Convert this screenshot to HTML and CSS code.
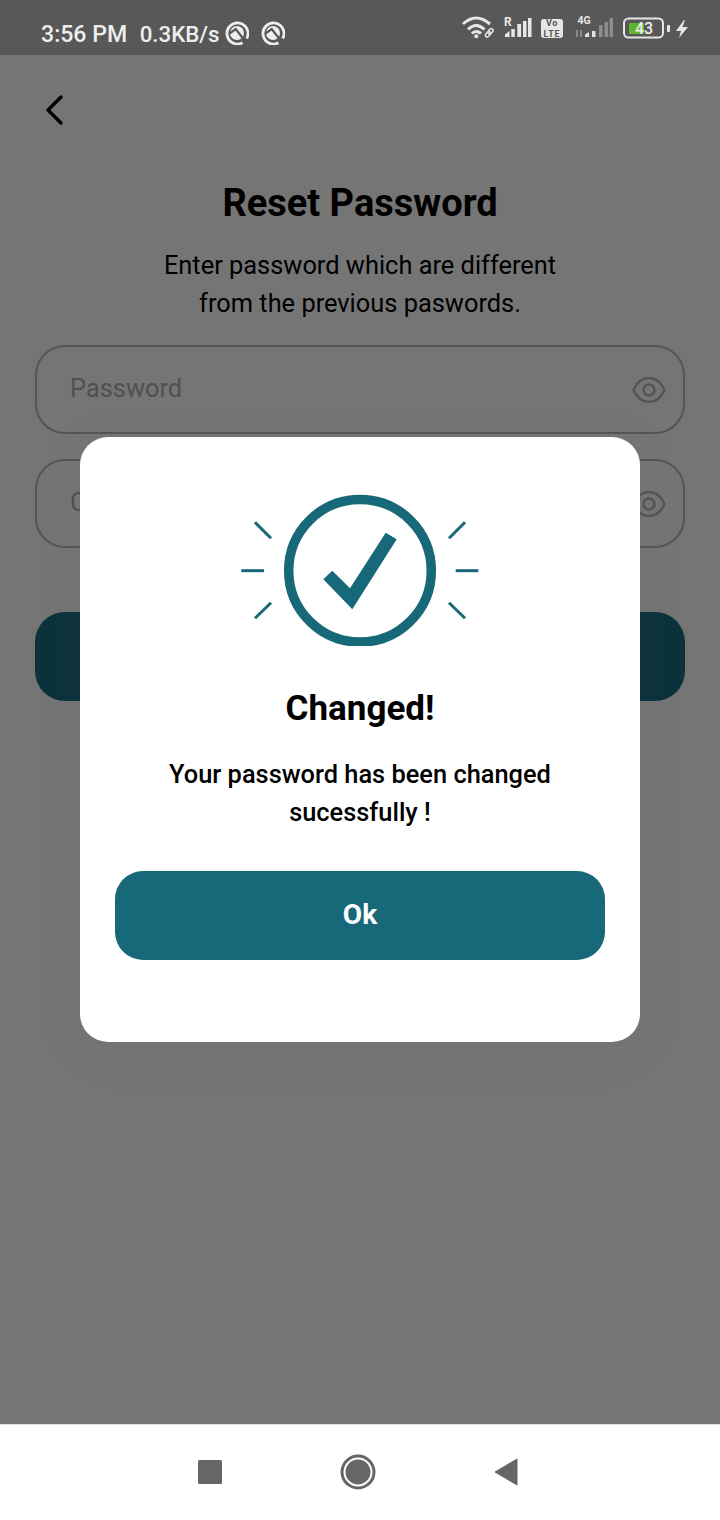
FILE: index.html
```html
<!DOCTYPE html>
<html lang="en">
<head>
    <meta charset="UTF-8">
    <meta name="viewport" content="width=device-width, initial-scale=1.0">
    <title>Reset Password</title>
    <link rel="stylesheet" href="styles.css">
</head>
<body>

    <div class="status-bar">
        <span class="clock">3:56 PM</span>
        <span class="speed">0.3KB/s</span>
        <svg class="dnd first" viewBox="0 0 24 24">
            <path d="M17.500 21.700A10.500 10.500 0 1 1 21.700 17.500" fill="none" stroke="#eee" stroke-width="2.800"/>
            <circle cx="12" cy="12" r="7" fill="#eee"/>
            <path d="M4.500 12.500L10.700 8 20 20" fill="none" stroke="#585858" stroke-width="2.200"/>
        </svg>
        <svg class="dnd" viewBox="0 0 24 24">
            <path d="M17.500 21.700A10.500 10.500 0 1 1 21.700 17.500" fill="none" stroke="#eee" stroke-width="2.800"/>
            <circle cx="12" cy="12" r="7" fill="#eee"/>
            <path d="M4.500 12.500L10.700 8 20 20" fill="none" stroke="#585858" stroke-width="2.200"/>
        </svg>
        <svg class="sys-icons" viewBox="460 20 232 30">
            <!-- wifi -->
            <g fill="none" stroke="#e6e6e6" stroke-width="3">
                <path d="M463 31Q476 19 490 31"/>
                <path d="M468 36.500Q476 28.500 484.500 36.500"/>
                <path d="M472 40.500Q476 36.500 481 40.500"/>
            </g>
            <circle cx="476.300" cy="43.300" r="2" fill="#e6e6e6"/>
            <g fill="none" stroke="#e6e6e6" stroke-width="1.500">
                <rect x="485" y="39.500" width="6" height="3.600" rx="1.800" transform="rotate(-50 488 41.300)"/>
                <rect x="487.500" y="36.500" width="6" height="3.600" rx="1.800" transform="rotate(-50 490.500 38.300)"/>
            </g>
            <!-- sim 1 -->
            <text class="sig-label" x="504" y="33">R</text>
            <g fill="#e6e6e6">
                <path d="M505 44v-2.500l4.500-3.500v6z"/>
                <rect x="511.300" y="36" width="3.500" height="8"/>
                <rect x="517.300" y="31" width="3.800" height="13"/>
                <rect x="523" y="28" width="3.500" height="16"/>
                <rect x="528" y="25" width="3.500" height="19"/>
            </g>
            <!-- volte -->
            <rect x="541" y="26" width="22" height="19" rx="3" fill="#e6e6e6"/>
            <text class="volte" x="552" y="33.300">Vo</text>
            <text class="volte lte" x="552" y="44">LTE</text>
            <!-- sim 2 -->
            <text class="sig-label small" x="577.500" y="30.500">4G</text>
            <path d="M577 37v7M581 37v7" stroke="#9a9a9a" stroke-width="1.500"/>
            <path d="M585 44v-2.500l4-2.500v5z" fill="#e0e0e0"/>
            <rect x="592" y="38" width="3.500" height="6" fill="#e0e0e0"/>
            <g fill="#8c8c8c">
                <rect x="599" y="32" width="3.500" height="12"/>
                <rect x="604.500" y="29" width="3.500" height="15"/>
                <rect x="609.500" y="25" width="3.500" height="19"/>
            </g>
            <!-- battery -->
            <rect x="624" y="25.500" width="39" height="19" rx="4.500" fill="none" stroke="#e6e6e6" stroke-width="2"/>
            <rect x="629" y="30" width="15" height="11" rx="1" fill="#5fb52d"/>
            <text class="batt" x="644" y="41">43</text>
            <rect x="667" y="32" width="3" height="7" rx="1" fill="#e6e6e6"/>
            <path d="M684 27l-8 11h5l-2 7 9-11h-5.500l2.500-7z" fill="#e6e6e6"/>
        </svg>
    </div>

    <div class="screen">
        <button class="back">
            <svg viewBox="0 0 20 32" width="20" height="32">
                <path d="M17 3L4 16l13 13" fill="none" stroke="#000" stroke-width="3.400" stroke-linecap="round" stroke-linejoin="round"/>
            </svg>
        </button>

        <h2 class="title">Reset Password</h2>
        <p class="subtitle">Enter password which are different<br>from the previous paswords.</p>

        <div class="field">
            <span class="placeholder">Password</span>
            <svg class="eye" viewBox="0 0 34 28">
                <path d="M1.500 14C5 6 10.500 2 17 2s12 4 15.500 12C29 22 23.500 26 17 26S5 22 1.500 14z" fill="none" stroke="#555" stroke-width="2.600"/>
                <circle cx="17" cy="14" r="5.500" fill="none" stroke="#555" stroke-width="2.600"/>
            </svg>
        </div>
        <div class="field second">
            <span class="placeholder">Confirm Password</span>
            <svg class="eye" viewBox="0 0 34 28">
                <path d="M1.500 14C5 6 10.500 2 17 2s12 4 15.500 12C29 22 23.500 26 17 26S5 22 1.500 14z" fill="none" stroke="#555" stroke-width="2.600"/>
                <circle cx="17" cy="14" r="5.500" fill="none" stroke="#555" stroke-width="2.600"/>
            </svg>
        </div>
        <div class="submit"></div>

        <div class="dialog">
            <svg class="success" viewBox="0 0 240 156" width="240" height="156">
                <circle cx="120" cy="80.700" r="71.300" fill="none" stroke="#176879" stroke-width="9.500"/>
                <path d="M145.700 42.700L156.700 49.300 112.300 119.300 83.300 89.300 92.300 80.700 110 98.300z" fill="#176879"/>
                <g stroke="#176879" stroke-width="3">
                    <path d="M1.300 80.700H24"/>
                    <path d="M215.700 80.700H238.300"/>
                    <path d="M15 32.300L31 48.300"/>
                    <path d="M225 32.300L209 48.300"/>
                    <path d="M31 112.700L15 128.300"/>
                    <path d="M209 112.700L225 128.300"/>
                </g>
            </svg>
            <h3 class="dialog-title">Changed!</h3>
            <p class="dialog-text">Your password has been changed<br>sucessfully !</p>
            <button class="ok">Ok</button>
        </div>
    </div>

    <div class="nav-bar">
        <svg viewBox="0 0 24 24" width="24" height="24"><rect width="24" height="24" rx="1.500" fill="#666"/></svg>
        <svg viewBox="0 0 36 36" width="36" height="36">
            <circle cx="18" cy="18" r="16" fill="none" stroke="#666" stroke-width="3"/>
            <circle cx="18" cy="18" r="12.500" fill="#666"/>
        </svg>
        <svg viewBox="0 0 24 28" width="24" height="28"><path d="M23 1v26L1 14z" fill="#666" stroke="#666" stroke-linejoin="round"/></svg>
    </div>

</body>
</html>
```

FILE: styles.css
```css
* {
    box-sizing: border-box;
}

body {
    font-family: Roboto, sans-serif;
    margin: 0;
    width: 720px;
    height: 1520px;
    display: flex;
    flex-direction: column;
    overflow: hidden;
    background: #757575;
}

.status-bar {
    height: 55px;
    background: #585858;
    color: #eee;
    display: flex;
    align-items: center;
    padding: 13px 0 0 41px;
    font-weight: 500;
}

.clock {
    font-size: 23.100px;
}

.speed {
    font-size: 22.300px;
    margin-left: 12.500px;
}

.dnd {
    width: 24px;
    height: 24px;
    margin-left: 12px;
    margin-top: -2px;
}

.dnd.first {
    margin-left: 5px;
}

.sys-icons {
    width: 232px;
    height: 30px;
    margin-left: auto;
    margin-right: 28px;
    margin-top: -13px;
}

.sig-label {
    font-size: 12px;
    font-weight: 700;
    fill: #e6e6e6;
}

.sig-label.small {
    font-size: 10.500px;
}

.volte {
    font-size: 9px;
    font-weight: 700;
    fill: #555;
    text-anchor: middle;
    letter-spacing: 0.5px;
}

.volte.lte {
    font-size: 9px;
    letter-spacing: 0.8px;
}

.batt {
    font-size: 16px;
    font-weight: 500;
    fill: #eee;
    text-anchor: middle;
}

.screen {
    flex: 1;
    position: relative;
    padding: 26px 35px 0;
    display: flex;
    flex-direction: column;
}

.back {
    background: none;
    border: none;
    padding: 0;
    margin-left: 9px;
    width: 20px;
    height: 60px;
}

.title {
    font-size: 38px;
    font-weight: 700;
    color: #000;
    text-align: center;
    margin: 37px 0 0;
    line-height: 50px;
}

.subtitle {
    font-size: 25.400px;
    color: #000;
    text-align: center;
    line-height: 38px;
    margin: 18px 0 0;
}

.field {
    height: 89px;
    margin-top: 23px;
    border: 2px solid #555;
    border-radius: 30px;
    display: flex;
    align-items: center;
    justify-content: space-between;
    padding: 0 17px 0 33px;
}

.field.second {
    margin-top: 25px;
}

.placeholder {
    font-size: 25.400px;
    color: #505050;
    margin-top: -4px;
}

.eye {
    width: 34px;
    height: 28px;
}

.submit {
    height: 89px;
    margin-top: 64px;
    background: #0c323c;
    border-radius: 30px;
}

.dialog {
    position: absolute;
    left: 80px;
    top: 382px;
    width: 560px;
    height: 605px;
    background: white;
    border-radius: 28px;
    box-shadow: 0 10px 50px rgba(90, 100, 130, 0.08);
    display: flex;
    flex-direction: column;
    align-items: center;
    padding-top: 53px;
}

.success {
    display: block;
}

.dialog-title {
    font-size: 35px;
    font-weight: 700;
    color: #000;
    line-height: 40px;
    margin: 43px 0 0;
}

.dialog-text {
    font-size: 25.400px;
    font-weight: 500;
    color: #000;
    text-align: center;
    line-height: 38px;
    margin: 26px 0 0;
}

.ok {
    width: 490px;
    height: 89px;
    margin-top: 40px;
    border: none;
    border-radius: 28px;
    background: #176879;
    color: white;
    font-family: Roboto, sans-serif;
    font-size: 28px;
    font-weight: 700;
    padding: 0 0 2px;
}

.nav-bar {
    height: 96px;
    background: white;
    border-top: 1px solid #e4e4e4;
    display: flex;
    align-items: center;
    justify-content: center;
    gap: 118px;
    padding: 0 4px 2px 0;
}
```
